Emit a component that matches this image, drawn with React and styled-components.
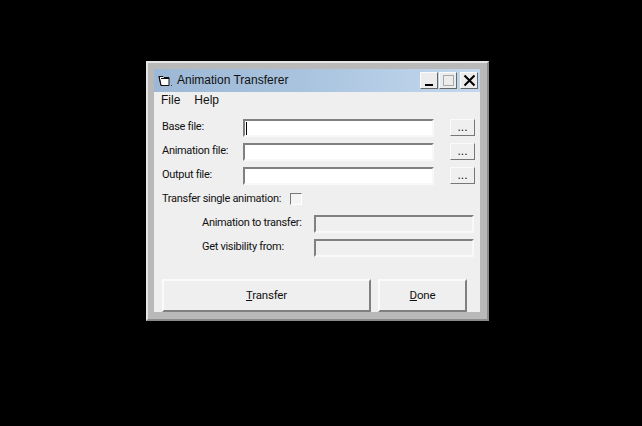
import React from "react";
import styled, { createGlobalStyle } from "styled-components";

const Global = createGlobalStyle`
  html, body { margin: 0; padding: 0; background: #000; }
  body { width: 642px; height: 426px; overflow: hidden; font-family: "Liberation Sans", Arial, sans-serif; }
`;

const Desktop = styled.div`
  width: 642px;
  height: 426px;
  background: #000;
  box-sizing: border-box;
  padding: 61px 0 0 146px;
`;

const Win = styled.div`
  width: 343px;
  height: 260px;
  box-sizing: border-box;
  background: #b9b9b9;
  border-top: 2px solid #e6e6e6;
  border-left: 2px solid #e6e6e6;
  border-right: 2px solid #8a8a8a;
  border-bottom: 2px solid #8a8a8a;
  padding: 6px 7px 7px 6px;
  display: flex;
  flex-direction: column;
`;

const TitleBar = styled.div`
  height: 23px;
  flex: none;
  display: flex;
  align-items: center;
  padding: 0 2px 0 4px;
  background: linear-gradient(90deg, #9db8d6 0%, #a9c3de 45%, #c3d8ee 100%);
`;

const TitleText = styled.span`
  margin: 0 0 2px 5px;
  font-size: 12px;
  color: #111;
  flex: 1;
`;

const CapButton = styled.div`
  width: 18px;
  height: 17px;
  box-sizing: border-box;
  margin-left: ${(p) => p.$gap || 0}px;
  background: #ececec;
  border: 1px solid;
  border-color: #fafafa #666 #666 #fafafa;
  display: flex;
  align-items: center;
  justify-content: center;
`;

const Client = styled.div`
  flex: 1;
  background: #efefef;
  display: flex;
  flex-direction: column;
`;

const MenuBar = styled.div`
  height: 19px;
  display: flex;
  align-items: flex-start;
  padding: 1px 0 0 7px;
  box-sizing: border-box;
  gap: 14px;
  font-size: 12px;
  line-height: 14px;
  color: #111;
`;

const Form = styled.div`
  padding: 8px 5px 0 8px;
  display: flex;
  flex-direction: column;
`;

const FileRow = styled.div`
  display: flex;
  height: 18px;
  margin-bottom: 6px;
`;

const Label = styled.span`
  font-family: Roboto, "Liberation Sans", sans-serif;
  font-size: 11px;
  letter-spacing: -0.3px;
  color: #111;
  line-height: 14px;
  padding-top: 1px;
  white-space: nowrap;
`;

const FileLabel = styled(Label)`
  width: 81px;
  flex: none;
`;

const Field = styled.div`
  width: 191px;
  height: 18px;
  box-sizing: border-box;
  background: ${(p) => (p.$disabled ? "#efefef" : "#fff")};
  border: 2px solid;
  border-color: #808080 #f8f8f8 #f8f8f8 #808080;
  padding: 1px 0 0 1px;
`;

const Caret = styled.div`
  width: 1px;
  height: 13px;
  background: #000;
`;

const BrowseButton = styled.div`
  width: 25px;
  height: 17px;
  margin-left: 16px;
  box-sizing: border-box;
  background: #efefef;
  border: 1px solid;
  border-color: #fafafa #777 #777 #fafafa;
  font-size: 12px;
  line-height: 14px;
  text-align: center;
  color: #222;
`;

const CheckRow = styled.div`
  display: flex;
  align-items: flex-start;
  height: 24px;
`;

const CheckBox = styled.div`
  width: 10px;
  height: 10px;
  margin: 2px 0 0 9px;
  background: #f4f4f4;
  border: 1px solid;
  border-color: #777 #fff #fff #777;
`;

const SubRow = styled.div`
  display: flex;
  height: 18px;
  margin-bottom: 6px;
  padding-left: 40px;
`;

const SubLabel = styled(Label)`
  width: 112px;
  flex: none;
`;

const WideField = styled(Field)`
  width: 160px;
`;

const Actions = styled.div`
  display: flex;
  gap: 7px;
  margin-top: 16px;
`;

const ActionButton = styled.div`
  width: ${(p) => p.$w}px;
  height: 33px;
  box-sizing: border-box;
  background: #efefef;
  border: 2px solid;
  border-color: #fafafa #808080 #808080 #fafafa;
  font-family: Roboto, "Liberation Sans", sans-serif;
  font-size: 11.5px;
  letter-spacing: -0.2px;
  color: #111;
  padding-bottom: 2px;
  display: flex;
  align-items: center;
  justify-content: center;
  u { text-underline-offset: 1px; }
`;

const rows = ["Base file:", "Animation file:", "Output file:"];

export default function App() {
  return (
    <Desktop>
      <Global />
      <Win>
        <TitleBar>
          <svg width="14" height="13" viewBox="0 0 14 13">
            <path d="M1 2.5h4l1 1h5v8H3z" fill="#fff" stroke="#111" />
            <path d="M1 2.5l2 9M3 4.5h8" fill="none" stroke="#111" />
            <path d="M13 11h1v1h-1z" fill="#333" />
          </svg>
          <TitleText>Animation Transferer</TitleText>
          <CapButton>
            <svg width="11" height="11" viewBox="0 0 11 11">
              <path d="M1 9h8v2H1z" fill="#000" />
            </svg>
          </CapButton>
          <CapButton $gap={1}>
            <svg width="11" height="11" viewBox="0 0 11 11">
              <path d="M0.5 0.5h10v10h-10z" fill="none" stroke="#a8a8a8" />
              <path d="M0 0h11v1H0z" fill="#a8a8a8" />
            </svg>
          </CapButton>
          <CapButton $gap={3}>
            <svg width="13" height="13" viewBox="0 0 13 13">
              <path d="M1.5 1.5l10 10M11.5 1.5l-10 10" stroke="#000" strokeWidth="2" />
            </svg>
          </CapButton>
        </TitleBar>
        <Client>
          <MenuBar>
            <span>File</span>
            <span>Help</span>
          </MenuBar>
          <Form>
            {rows.map((r, i) => (
              <FileRow key={r}>
                <FileLabel>{r}</FileLabel>
                <Field>{i === 0 && <Caret />}</Field>
                <BrowseButton>...</BrowseButton>
              </FileRow>
            ))}
            <CheckRow>
              <Label>Transfer single animation:</Label>
              <CheckBox />
            </CheckRow>
            <SubRow>
              <SubLabel>Animation to transfer:</SubLabel>
              <WideField $disabled />
            </SubRow>
            <SubRow>
              <SubLabel>Get visibility from:</SubLabel>
              <WideField $disabled />
            </SubRow>
            <Actions>
              <ActionButton $w={209}>
                <span><u>T</u>ransfer</span>
              </ActionButton>
              <ActionButton $w={89}>
                <span><u>D</u>one</span>
              </ActionButton>
            </Actions>
          </Form>
        </Client>
      </Win>
    </Desktop>
  );
}
